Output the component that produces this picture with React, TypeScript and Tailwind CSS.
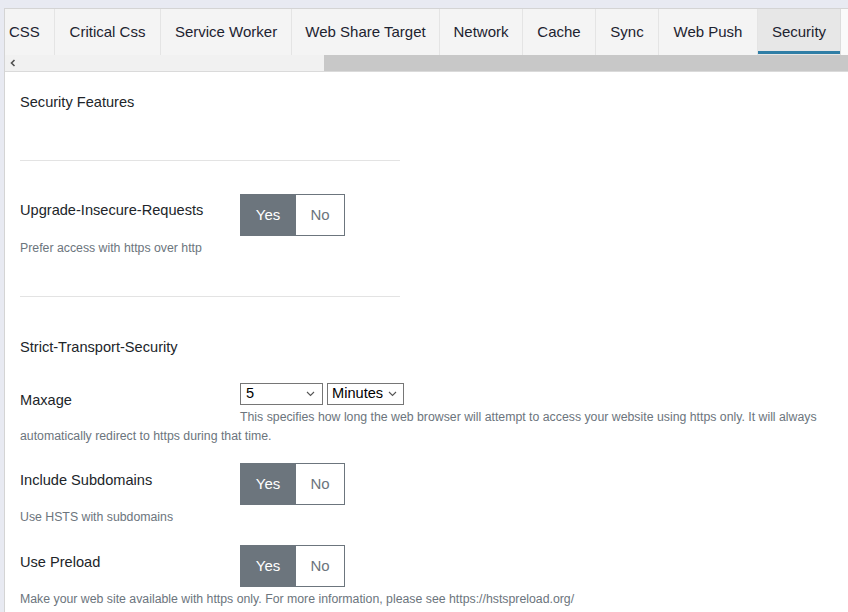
import React from 'react'

const tabs = [
  { name: 'CSS', w: 'w-[50px]', pad: 'pl-[4px]' },
  { name: 'Critical Css', w: 'w-[106px]', pad: 'justify-center' },
  { name: 'Service Worker', w: 'w-[131px]', pad: 'justify-center' },
  { name: 'Web Share Target', w: 'w-[148px]', pad: 'justify-center' },
  { name: 'Network', w: 'w-[83px]', pad: 'justify-center' },
  { name: 'Cache', w: 'w-[73px]', pad: 'justify-center' },
  { name: 'Sync', w: 'w-[63px]', pad: 'justify-center' },
  { name: 'Web Push', w: 'w-[99px]', pad: 'justify-center' },
]

function Chevron() {
  return (
    <svg width='9' height='6' viewBox='0 0 9 6' className='shrink-0'>
      <path d='M1 1 L4.5 4.5 L8 1' fill='none' stroke='#555' strokeWidth='1.1' />
    </svg>
  )
}

function YesNo() {
  return (
    <div className='flex h-[42px] text-[15px]'>
      <div className='w-[56px] flex items-center justify-center bg-[#6c757d] text-white'>Yes</div>
      <div className='w-[49px] flex items-center justify-center bg-white text-[#6c757d] border border-l-0 border-[#6c757d]'>No</div>
    </div>
  )
}

function Help({ children, className = '' }: { children: React.ReactNode; className?: string }) {
  return <p className={'text-[12.3px] leading-[16px] text-[#6c757d] ' + className}>{children}</p>
}

export default function App() {
  return (
    <div className="min-h-screen bg-[#e8eaf2] pt-2 pl-1 overflow-hidden font-['Liberation_Sans',Arial,sans-serif]">
      <div className='bg-white border-l border-t border-[#d4d4d4] h-[604px]'>
        {/* tab strip */}
        <div className='flex h-[46px] bg-[#f9f9f9] text-[15px] text-[#1d2330]'>
          {tabs.map((t) => (
            <div key={t.name} className={'flex items-center shrink-0 bg-[#f4f4f4] border-r border-[#e4e4e4] ' + t.w + ' ' + t.pad}>
              {t.name}
            </div>
          ))}
          <div className='w-[83px] shrink-0 flex flex-col bg-[#e7e7e7] border-r border-[#dcdcdc]'>
            <div className='flex-1 flex items-center justify-center pt-[4px]'>Security</div>
            <div className='h-[3px] bg-[#2f7ea6] mb-[1px]' />
          </div>
          <div className='flex-1 bg-[#fafafa]' />
        </div>
        {/* scrollbar */}
        <div className='flex h-[17px] bg-[#f1f1f1] border-b border-[#dadada]'>
          <div className='w-[319px] flex items-center pl-[5px]'>
            <svg width='6' height='8' viewBox='0 0 6 8'>
              <path d='M4.5 1 L1.5 4 L4.5 7' fill='none' stroke='#505050' strokeWidth='1.6' />
            </svg>
          </div>
          <div className='flex-1 bg-[#c8c8c8]' />
        </div>

        <div className='pl-[15px] text-[#212529]'>
          <div className='h-[88px] pt-[20px] text-[14.6px] leading-[20px]'>Security Features</div>
          <div className='w-[380px] border-t border-[#e3e3e3]' />

          <div className='flex mt-[33px]'>
            <div className='w-[220px] pt-[6px] text-[14.6px] leading-[20px]'>Upgrade-Insecure-Requests</div>
            <YesNo />
          </div>
          <Help className='mt-[4px]'>Prefer access with https over http</Help>
          <div className='w-[380px] border-t border-[#e3e3e3] mt-[40px]' />

          <div className='mt-[40px] text-[14.6px] leading-[20px]'>Strict-Transport-Security</div>

          <div className='flex h-[22px] mt-[26px]'>
            <div className='w-[220px] pt-[7px] text-[14.6px] leading-[20px]'>Maxage</div>
            <div className='flex gap-[4px] text-[14.6px] text-black'>
              <div className='w-[83px] h-[22px] border border-[#767676] flex items-center justify-between pl-[5px] pr-[7px]'>
                <span>5</span>
                <Chevron />
              </div>
              <div className='w-[77px] h-[22px] border border-[#767676] flex items-center justify-between pl-[4px] pr-[6px]'>
                <span>Minutes</span>
                <Chevron />
              </div>
            </div>
          </div>
          <p className='mt-[3px] pr-[20px] text-[12.3px] leading-[19px] text-[#6c757d] indent-[220px]'>
            This specifies how long the web browser will attempt to access your website using https only. It will always automatically redirect to https during that time.
          </p>

          <div className='flex mt-[17px]'>
            <div className='w-[220px] pt-[7px] text-[14.6px] leading-[20px]'>Include Subdomains</div>
            <YesNo />
          </div>
          <Help className='mt-[4px]'>Use HSTS with subdomains</Help>

          <div className='flex mt-[20px]'>
            <div className='w-[220px] pt-[7px] text-[14.6px] leading-[20px]'>Use Preload</div>
            <YesNo />
          </div>
          <Help className='mt-[4px]'>Make your web site available with https only. For more information, please see https://hstspreload.org/</Help>
        </div>
      </div>
    </div>
  )
}
